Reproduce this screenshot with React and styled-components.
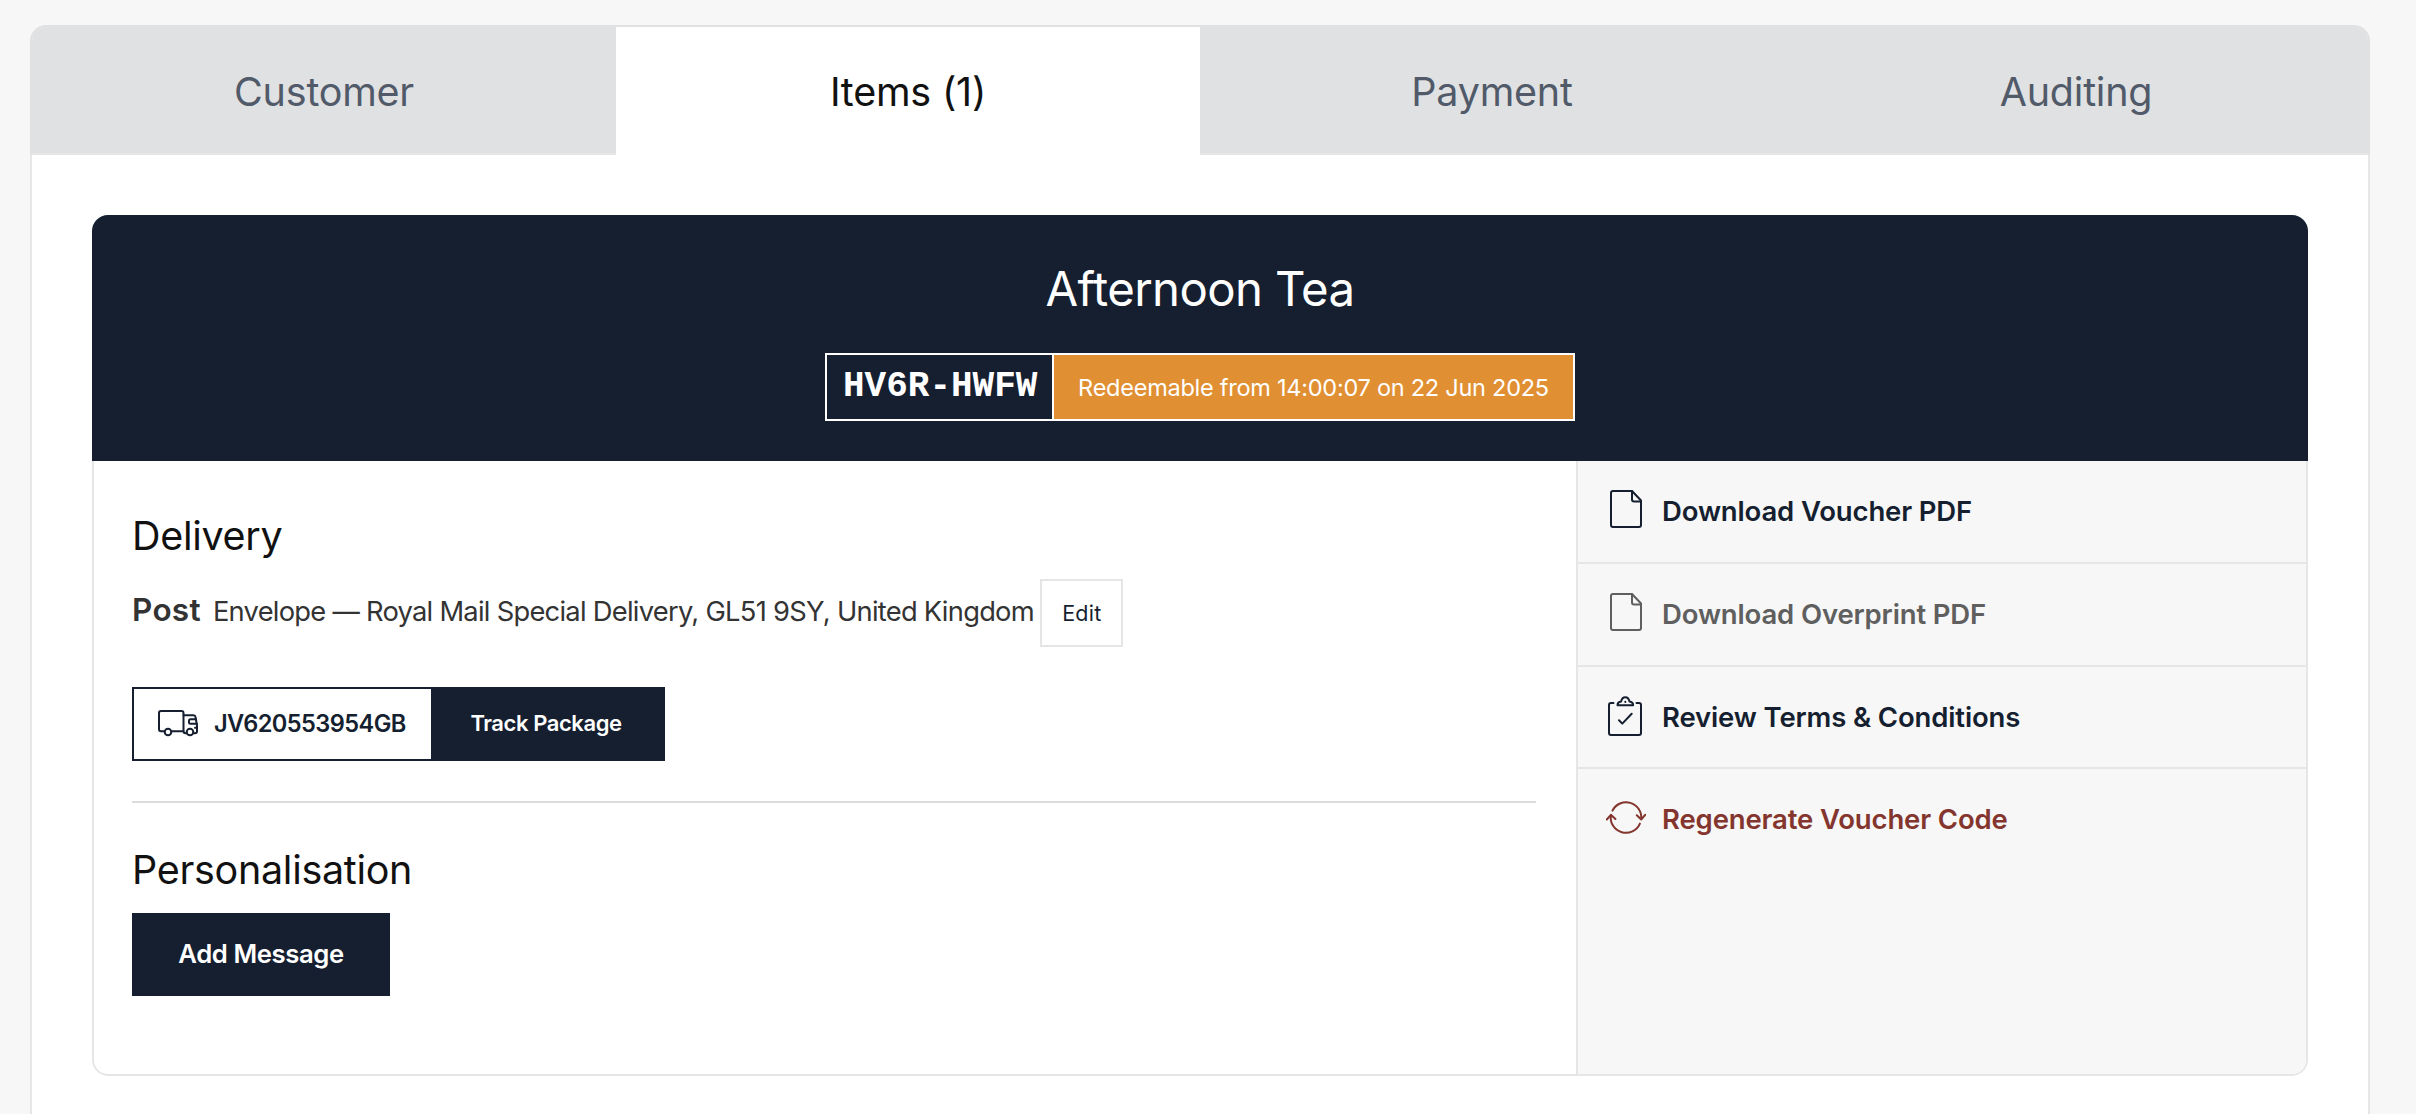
import React, { useState } from "react";
import styled, { createGlobalStyle } from "styled-components";

const TABS = ["Customer", "Items (1)", "Payment", "Auditing"];

const FileIcon = () => (
  <St.Icon viewBox="0 0 40 40">
    <path d="M26 2H7a2 2 0 0 0-2 2v32a2 2 0 0 0 2 2h26a2 2 0 0 0 2-2V11.5z" />
    <path d="M26 2v8.5a2 2 0 0 0 2 2h7" />
  </St.Icon>
);

const ClipboardIcon = () => (
  <St.Icon viewBox="0 0 40 40">
    <path d="M7.5 7H5a2 2 0 0 0-2 2v28a2 2 0 0 0 2 2h28a2 2 0 0 0 2-2V9a2 2 0 0 0-2-2h-2.5" />
    <path d="M11.5 9.2c0-2.4 1.3-3.3 3.6-3.6C15.6 3 17.2 1.2 19.3 1.2s3.7 1.8 4.2 4.4c2.3.3 3.6 1.2 3.6 3.6z" />
    <path d="M19.3 5.7v.2" />
    <path d="M13 24.3l3.3 3.3 9.4-9.8" />
  </St.Icon>
);

const RefreshIcon = () => (
  <St.Icon viewBox="0 0 40 40">
    <path d="M6.5 13.6A15.2 15.2 0 0 1 35.2 22" />
    <path d="M30.8 18.3l4.4 4.2 4.2-4.8" />
    <path d="M33.9 26.6A15.2 15.2 0 0 1 4.9 18.3" />
    <path d="M.8 22.5l4.1-4.7 4.5 4.2" />
  </St.Icon>
);

const TruckIcon = () => (
  <St.Icon viewBox="0 0 40 40">
    <path d="M6.5 28.2H3a2 2 0 0 1-2-2V10a2 2 0 0 1 2-2h20.5a2 2 0 0 1 2 2v18.2H13.5" />
    <path d="M25.5 12.3h10a2 2 0 0 1 2 1.7l1.5 8.5v5.7a2 2 0 0 1-2 2h-1.5M25.5 28.2a2 2 0 0 0 2 2h1" />
    <path d="M38 16.3h-5.5a1.5 1.5 0 0 0-1.5 1.5v1.500a1.5 1.5 0 0 0 1.5 1.5h6.3" />
    <path d="M39 24.7h-2" />
    <circle cx="10" cy="29" r="3.3" />
    <circle cx="32" cy="29" r="3.3" />
  </St.Icon>
);

const ACTIONS = [
  { label: "Download Voucher PDF", icon: FileIcon, color: "#151f30" },
  { label: "Download Overprint PDF", icon: FileIcon, color: "#5f5f5f" },
  { label: "Review Terms & Conditions", icon: ClipboardIcon, color: "#151f30" },
  { label: "Regenerate Voucher Code", icon: RefreshIcon, color: "#83352e" },
];

const App = () => {
  const [activeTab, setActiveTab] = useState("Items (1)");

  return (
    <St.Page>
      <GlobalStyle />
      <St.Panel>
        <St.Tabs>
          {TABS.map((tab) => (
            <St.Tab
              key={tab}
              $active={tab === activeTab}
              onClick={() => setActiveTab(tab)}
            >
              {tab}
            </St.Tab>
          ))}
        </St.Tabs>

        <St.Card>
          <St.CardHeader>
            <St.Title>Afternoon Tea</St.Title>
            <St.Voucher>
              <St.VoucherCode>HV6R-HWFW</St.VoucherCode>
              <St.VoucherStatus>
                Redeemable from 14:00:07 on 22 Jun 2025
              </St.VoucherStatus>
            </St.Voucher>
          </St.CardHeader>

          <St.CardBody>
            <St.Details>
              <St.Heading>Delivery</St.Heading>
              <St.DeliveryRow>
                <St.Method>Post</St.Method>
                <St.Address>
                  Envelope — Royal Mail Special Delivery, GL51 9SY, United
                  Kingdom
                </St.Address>
                <St.EditBtn>Edit</St.EditBtn>
              </St.DeliveryRow>
              <St.Tracking>
                <St.TrackingCode>
                  <TruckIcon />
                  JV620553954GB
                </St.TrackingCode>
                <St.TrackBtn>Track Package</St.TrackBtn>
              </St.Tracking>
              <St.Divider />
              <St.Heading>Personalisation</St.Heading>
              <St.MessageBtn>Add Message</St.MessageBtn>
            </St.Details>

            <St.Actions>
              {ACTIONS.map(({ label, icon: Icon, color }) => (
                <St.Action key={label} $color={color}>
                  <Icon />
                  {label}
                </St.Action>
              ))}
            </St.Actions>
          </St.CardBody>
        </St.Card>
      </St.Panel>
    </St.Page>
  );
};

export default App;

const GlobalStyle = createGlobalStyle`
  * {
    box-sizing: border-box;
  }

  body {
    margin: 0;
    background-color: #f7f7f7;
    font-family: "Inter", "Liberation Sans", sans-serif;
    overflow: hidden;
  }

  button {
    margin: 0;
    padding: 0;
    border: none;
    font-family: inherit;
    cursor: pointer;
  }
`;

const St = {
  Page: styled.main`
    height: 1114px;
    padding: 25px 46px 0 30px;
    overflow: hidden;
  `,

  Panel: styled.section`
    height: 1200px;
    border: 2px solid #e6e7e8;
    border-top-color: #e0e1e3;
    border-radius: 16px;
    background-color: #fff;
  `,

  Tabs: styled.nav`
    display: grid;
    grid-template-columns: repeat(4, 1fr);
    height: 128px;
    margin: 0 -2px;
    padding: 0 2px;
    border-radius: 14px 14px 0 0;
    box-shadow: inset 2px 0 #e0e1e3, inset -2px 0 #e0e1e3;
  `,

  Tab: styled.button`
    padding-top: 3px;
    border-bottom: 2px solid ${({ $active }) => ($active ? "#fff" : "#e6e7e8")};
    background-color: ${({ $active }) => ($active ? "#fff" : "#e0e1e3")};
    color: ${({ $active }) => ($active ? "#111" : "#515a69")};
    font-size: 39.5px;
    letter-spacing: -0.22px;

    &:first-child {
      border-top-left-radius: 14px;
    }

    &:last-child {
      border-top-right-radius: 14px;
    }
  `,

  Card: styled.article`
    margin: 60px 60px 0;
    border-radius: 16px;
    overflow: hidden;
  `,

  CardHeader: styled.header`
    display: flex;
    flex-direction: column;
    align-items: center;
    height: 246px;
    padding-top: 45px;
    background-color: #151f30;
    color: #fff;
  `,

  Title: styled.h1`
    margin: 0 0 35px;
    font-size: 47.3px;
    font-weight: 400;
    line-height: 58px;
    letter-spacing: -0.62px;
  `,

  Voucher: styled.div`
    display: flex;
    width: 750px;
    height: 68px;
    border: 2px solid #fff;
  `,

  VoucherCode: styled.span`
    display: flex;
    align-items: center;
    width: 227px;
    padding: 0 0 2px 16px;
    border-right: 2px solid #fff;
    font-family: "Liberation Mono", monospace;
    font-size: 36px;
    font-weight: 700;
  `,

  VoucherStatus: styled.span`
    display: flex;
    flex: 1;
    align-items: center;
    justify-content: center;
    background-color: #e09033;
    font-size: 23.5px;
    letter-spacing: -0.25px;
    white-space: nowrap;
  `,

  CardBody: styled.div`
    display: flex;
    height: 615px;
    border: 2px solid #e6e6e6;
    border-top: none;
    border-radius: 0 0 16px 16px;
    overflow: hidden;
  `,

  Details: styled.div`
    flex: 1;
    padding: 51px 40px 0 38px;
  `,

  Heading: styled.h2`
    margin: 0 0 19px;
    color: #111;
    font-size: 39.5px;
    font-weight: 400;
    line-height: 48px;
    letter-spacing: -0.3px;
  `,

  DeliveryRow: styled.div`
    display: flex;
    align-items: baseline;
    height: 68px;
    color: #333;
    white-space: nowrap;
  `,

  Method: styled.strong`
    margin-right: 12px;
    font-size: 31.5px;
    font-weight: 600;
    letter-spacing: 0.3px;
  `,

  Address: styled.span`
    width: 827.5px;
    font-size: 27.3px;
    letter-spacing: -0.73px;
  `,

  EditBtn: styled.button`
    width: 83px;
    height: 68px;
    border: 2px solid #e5e5e5;
    background-color: #fff;
    color: #151f30;
    font-size: 21.5px;
    letter-spacing: 0.3px;
  `,

  Tracking: styled.div`
    display: inline-flex;
    width: 533px;
    height: 74px;
    margin-top: 40px;
    border: 2px solid #151f30;
    color: #151f30;
    vertical-align: top;
  `,

  TrackingCode: styled.span`
    display: flex;
    align-items: center;
    gap: 16px;
    width: 297px;
    padding: 0 0 2px 24px;
    font-size: 23.6px;
    font-weight: 600;
    letter-spacing: -0.58px;
  `,

  TrackBtn: styled.button`
    flex: 1;
    padding: 0 2px 2px 0;
    background-color: #151f30;
    color: #fff;
    font-size: 22px;
    font-weight: 600;
    letter-spacing: -0.42px;
  `,

  Divider: styled.hr`
    height: 2px;
    margin: 40px 0 43px;
    border: none;
    background-color: #dcdcdc;
  `,

  MessageBtn: styled.button`
    width: 258px;
    height: 83px;
    padding-bottom: 2px;
    background-color: #151f30;
    color: #fff;
    font-size: 25.7px;
    font-weight: 600;
    letter-spacing: -0.42px;
  `,

  Actions: styled.aside`
    width: 730px;
    border-left: 2px solid #e6e6e6;
    background-color: #f7f7f7;
  `,

  Action: styled.div`
    display: flex;
    align-items: center;
    gap: 16px;
    height: 103px;
    padding: 0 0 2px 28px;
    border-bottom: 2px solid #e6e6e6;
    color: ${({ $color }) => $color};
    font-size: 27.5px;
    font-weight: 600;
    letter-spacing: -0.14px;

    svg {
      margin-bottom: 3px;
    }

    &:nth-child(3) {
      height: 102px;
      padding-bottom: 0;
    }

    &:last-child {
      height: 101px;
      border-bottom: none;
    }
  `,

  Icon: styled.svg`
    flex-shrink: 0;
    width: 40px;
    height: 40px;
    fill: none;
    stroke: currentColor;
    stroke-width: 2;
    stroke-linecap: round;
    stroke-linejoin: round;
  `,
};
